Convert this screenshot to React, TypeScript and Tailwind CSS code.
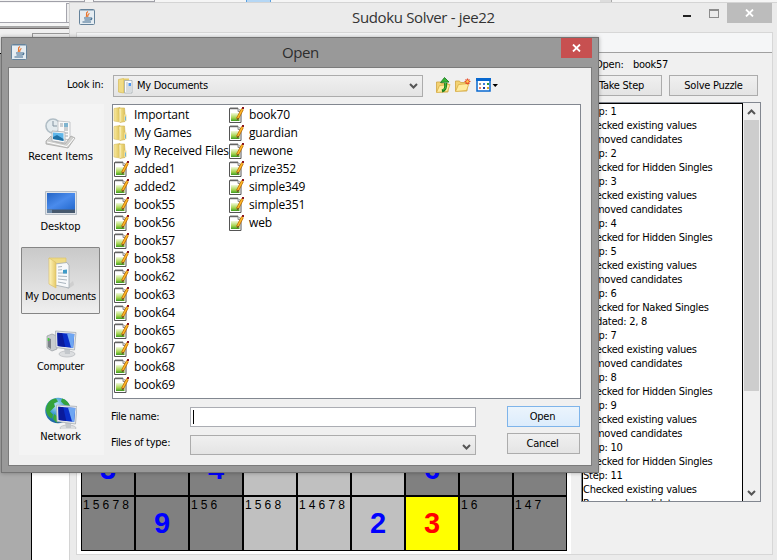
import React from "react";

const ui = "font-['DejaVu_Sans_Condensed','DejaVu_Sans',sans-serif] text-[11px] leading-[14px] tracking-[-0.26px]";
const segoe = "font-['Open_Sans','Noto_Sans',sans-serif]";

function JavaIcon() {
  return (
    <svg className="block h-4 w-4 shrink-0" viewBox="0 0 16 16">
      <rect x=".5" y=".5" width="15" height="15" rx="1" fill="#e6edf2" stroke="#65829a" />
      <path d="M1 1h14v1H1z" fill="#a9bccb" />
      <path d="M9 2.500C5.500 4.500 9 5.500 7 8M10.500 4.500C8 5.500 9.500 6.500 8.500 8" stroke="#e8742c" strokeWidth="1.200" fill="none" />
      <path d="M5 9h6M5.500 11h5M3.500 13h8.500M11 9c3-.5 2 2-.5 2" stroke="#3f6a8e" strokeWidth="1.100" fill="none" />
    </svg>
  );
}

function FolderIcon() {
  return (
    <svg className="block h-4 w-4 shrink-0" viewBox="0 0 16 16">
      <defs>
        <linearGradient id="fold" x1="0" x2="1">
          <stop offset="0" stopColor="#f8eaa4" />
          <stop offset=".5" stopColor="#ecd679" />
          <stop offset="1" stopColor="#dcc05a" />
        </linearGradient>
      </defs>
      <path d="M1 1.500 7 .5V15L1 14z" fill="url(#fold)" stroke="#d8be5f" strokeWidth=".6" />
      <path d="M6 1h5.500l.5 6v7.500L7 15.500z" fill="url(#fold)" stroke="#cfb250" strokeWidth=".6" />
      <path d="M11 7.500h2.500V14H11z" fill="#efdc93" />
      <path d="M12.500 9.500v4" stroke="#6fb4dc" />
      <path d="M7 2v13" stroke="#fbf3c7" />
    </svg>
  );
}

function NoteIcon() {
  return (
    <svg className="block h-[18px] w-[18px] shrink-0" viewBox="0 0 18 18">
      <defs>
        <linearGradient id="note" x1="0" y1="0" x2="0" y2="1">
          <stop offset="0" stopColor="#f2f9d9" />
          <stop offset=".6" stopColor="#a5d450" />
          <stop offset="1" stopColor="#3f9d20" />
        </linearGradient>
      </defs>
      <path d="M1.500 2.500H10l3 3v11H1.500z" fill="#fff" stroke="#555" />
      <path d="M3 1v2.500M5 1v2.500M7 1v2.500M9 1v2.500" stroke="#777" />
      <path d="M10 2.500v3h3" fill="#ddd" stroke="#777" strokeWidth=".8" />
      <path d="M3 7h8.500v8H3z" fill="url(#note)" />
      <path d="M14.500 3 9.300 13" stroke="#b96a00" strokeWidth="2.800" />
      <path d="M14.500 3 9.500 12.500" stroke="#ffb92b" strokeWidth="1.600" />
      <path d="m9.800 11.500-1.300 3.500 2.500-2.500z" fill="#5b4630" />
      <path d="M14 1h2v2h-2z" fill="#8b1620" />
    </svg>
  );
}

function DocsIcon({ className }: { className: string }) {
  return (
    <svg className={className} viewBox="0 0 32 32">
      <defs>
        <linearGradient id="dl" x1="0" x2="1">
          <stop offset="0" stopColor="#fff5bd" />
          <stop offset="1" stopColor="#e5c968" />
        </linearGradient>
      </defs>
      <path d="m21 30 7-6 1 4-6 4z" fill="#c0c0c0" opacity=".5" />
      <path d="M4 1h17v24l-12 1z" fill="#efdb86" stroke="#dcc46b" strokeWidth=".7" />
      <path d="m10 7 12-1.500 2 3V31l-14-3z" fill="#f7f9fb" stroke="#9fa9b2" strokeWidth=".8" />
      <path d="m13 10 4-.5M13 13l4-.3M13 16h9M13 19l9 .5M13 22l9 1M13 25l8 1.500" stroke="#aab5bf" strokeWidth="1" />
      <path d="m18 13 4-.5v4h-4z" fill="#3e9bc9" />
      <path d="m4 1 7 4.500V31l-7-4z" fill="url(#dl)" stroke="#dcc16a" strokeWidth=".7" />
    </svg>
  );
}

function SmallDocs() {
  return (
    <svg className="block h-4 w-4 shrink-0" viewBox="0 0 16 16">
      <path d="M.5 1.500 5.500.5V15l-5-1z" fill="#f0db85" stroke="#d9c065" strokeWidth=".8" />
      <path d="M5 .5h6l.5 14L5 15z" fill="#e5cc69" />
      <path d="M6.500 2.500h7.500V15H6.500z" fill="#fbfbfb" stroke="#9aa3ab" strokeWidth=".7" />
      <path d="M8 5h2M8 7h2M8 9h5M8 11h5M8 13h5" stroke="#a2adb8" strokeWidth=".8" />
      <path d="M10.500 5h2.500v3h-2.500z" fill="#4b95ef" />
    </svg>
  );
}

function RecentIcon() {
  return (
    <svg className="block h-8 w-8" viewBox="0 0 32 32">
      <circle cx="8" cy="9" r="7" fill="#e3ebef" stroke="#b0bdc5" strokeWidth="1.600" />
      <path d="M8 4v5h4" stroke="#8293a0" fill="none" />
      <path d="m13 4 12 1v18l-12-2z" fill="#fafafa" stroke="#b9bdc0" strokeWidth=".8" />
      <path d="M15 7h3M15 9h3M19 11h4M19 13h4M19 16h4M19 19h4" stroke="#9ba4aa" />
      <path d="M19 6h4v4h-4z" fill="#7fb4cf" />
      <path d="m1 24 5-5 2 5 12 3 6-8 4 2-7 10L1 27z" fill="#d0d0ce" stroke="#9f9f9d" strokeWidth=".7" />
      <path d="m7 14 13 1v11L7 24z" fill="#f8f8f8" stroke="#b5b8bb" />
      <path d="m8 15.500 10.500.7v7.500L8 22z" fill="#5fb6ea" />
      <path d="m8 20 4-2 6.500 4v2L8 22z" fill="#1f70a5" />
      <path d="m2 25 20 4.500 7-8.500" stroke="#fff" fill="none" />
    </svg>
  );
}

function DesktopIcon() {
  return (
    <svg className="block h-8 w-8" viewBox="0 0 32 32">
      <defs>
        <linearGradient id="desk" x1="0" y1="0" x2="1" y2="1">
          <stop offset="0" stopColor="#2464c4" />
          <stop offset=".5" stopColor="#4a8bec" />
          <stop offset="1" stopColor="#2368cd" />
        </linearGradient>
      </defs>
      <path d="M.5 4.500h31v23H.5z" fill="#dfe3e8" stroke="#b6bec7" />
      <path d="M2 6h28v17H2z" fill="url(#desk)" />
      <path d="M2 22.500h28V26H2z" fill="#46586d" />
      <path d="M2 22.500h5V26H2z" fill="#6a87a6" />
    </svg>
  );
}

function Monitor() {
  return (
    <g>
      <ellipse cx="22" cy="28" rx="8" ry="3" fill="#dcdee0" stroke="#b4b8bc" strokeWidth=".7" />
      <path d="m19 22 6 1v5h-5z" fill="#c3c7cb" />
      <path d="m10.500 5 20.500 1.500L29.500 24 11 21.500z" fill="#e5e8ea" stroke="#a7adb3" strokeWidth=".8" />
      <path d="m12.300 6.800 17 1.300-1.200 14-15.400-2z" fill="#0a2fc9" />
      <path d="m22 7.500 7.300.6-1.200 14-2-.3z" fill="#6ea6f2" />
      <path d="m12.300 6.800 5 .4 3 13.900-7.600-1z" fill="#0a1a9c" />
    </g>
  );
}

function ComputerIcon() {
  return (
    <svg className="block h-8 w-8" viewBox="0 0 32 32">
      <path d="m2 9 5-2 5 2v13l-5 2-5-3z" fill="#c9cdd0" stroke="#969b9f" strokeWidth=".7" />
      <path d="m3 11 3 1v10l-3-2z" fill="#7c8288" />
      <path d="M3.500 11v3" stroke="#45d03c" strokeWidth="1.500" />
      <g transform="translate(0 -1)"><Monitor /></g>
    </svg>
  );
}

function NetworkIcon() {
  return (
    <svg className="block h-8 w-8" viewBox="0 0 32 32">
      <defs>
        <radialGradient id="globe" cx=".45" cy=".3" r=".7">
          <stop offset="0" stopColor="#bfe8fa" />
          <stop offset=".5" stopColor="#3d9bd0" />
          <stop offset="1" stopColor="#165e9c" />
        </radialGradient>
      </defs>
      <circle cx="13" cy="13.500" r="12.800" fill="url(#globe)" />
      <path d="M1 12C2 5 6 2 11 1.500l2 3-4 2 1 3-5 5 3 3-1 4C3 20 1 16 1 12zM17 1.500c4 1 7 4 8 8l-6-2-3-3z" fill="#35a33b" />
      <path d="m9 17 4 3-1 6-4-4z" fill="#3baa36" />
      <g transform="translate(1 3)"><Monitor /></g>
    </svg>
  );
}

function Chevron({ up }: { up?: boolean }) {
  return (
    <svg className="block h-[6px] w-[9px] shrink-0" viewBox="0 0 9 6">
      <path d={up ? "m1 5 3.500-3.500L8 5" : "m1 1 3.500 3.500L8 1"} stroke="#555" strokeWidth="2" fill="none" />
    </svg>
  );
}

function Cross() {
  return (
    <svg className="block h-2 w-[9px]" viewBox="0 0 9 8">
      <path d="m1 .5 7 7M8 .5l-7 7" stroke="#fff" strokeWidth="1.800" />
    </svg>
  );
}

function OpenFolder() {
  return (
    <>
      <path d="M1.500 5h4l1 1.500H13V15H1.500z" fill="#f3d273" stroke="#cfa443" strokeWidth=".8" />
      <path d="m4.500 8.500 10.500-1-2.500 7-11 1z" fill="#ffec9f" stroke="#d9ad43" strokeWidth=".8" />
    </>
  );
}

const E = "Checked existing values";
const R = "Removed candidates";
const H = "Checked for Hidden Singles";
const log = [
  "Step: 1", E, R, "Step: 2", H, "Step: 3", E, R, "Step: 4", H, "Step: 5", E, R,
  "Step: 6", "Checked for Naked Singles", "Updated: 2, 8", "Step: 7", E, R, "Step: 8", H,
  "Step: 9", E, R, "Step: 10", H, "Step: 11", E, R,
];

type Cell = { bg: string; big?: string; color?: string; small?: string };
const dark = "bg-[#808080]";
const light = "bg-[#c0c0c0]";
const blue = "text-[#0000ff]";
const rows: Cell[][] = [
  [
    { bg: dark, big: "3", color: blue }, { bg: dark }, { bg: dark, big: "4", color: blue },
    { bg: light }, { bg: light }, { bg: light },
    { bg: dark, big: "6", color: blue }, { bg: dark }, { bg: dark },
  ],
  [
    { bg: dark, small: "1 5 6 7 8" }, { bg: dark, big: "9", color: blue }, { bg: dark, small: "1 5 6" },
    { bg: light, small: "1 5 6 8" }, { bg: light, small: "1 4 6 7 8" }, { bg: light, big: "2", color: blue },
    { bg: "bg-[#ffff00]", big: "3", color: "text-[#ff0000]" }, { bg: dark, small: "1 6" }, { bg: dark, small: "1 4 7" },
  ],
];

function Board() {
  return (
    <div className="mt-[388px] grid h-[110px] w-[486px] grid-cols-[repeat(9,52px)] grid-rows-[52px_53px] gap-[2px] bg-black pt-[2px] pl-px font-['Liberation_Sans',sans-serif]">
      {rows.flat().map((c, i) => (
        <div key={i} className={`overflow-hidden ${c.bg}`}>
          {c.small && <div className="pl-px pt-px text-[12px] leading-[14px] tracking-[-0.1px] whitespace-pre text-black">{c.small}</div>}
          {c.big && <div className={`pt-[9px] text-center text-[29px] leading-[34px] font-bold ${c.color}`}>{c.big}</div>}
        </div>
      ))}
    </div>
  );
}

function Button({ children, className }: { children: React.ReactNode; className: string }) {
  return <div className={`flex shrink-0 items-center justify-center border ${className}`}>{children}</div>;
}
const plain = "border-[#acacac] bg-linear-to-b from-[#f0f0f0] to-[#e4e4e4]";

function MainWindow() {
  return (
    <div className="absolute top-[2px] left-[69px] flex h-[570px] w-[720px] flex-col border border-[#d4d4d4] bg-[#ebebeb]">
      <div className="flex h-[29px] shrink-0">
        <div className="w-[9px]" />
        <div className="pt-[6px]"><JavaIcon /></div>
        <div className={`ml-[257px] w-[146px] pt-[4px] text-[15px] leading-[20px] tracking-[-0.35px] whitespace-nowrap text-[#333] ${segoe}`}>Sudoku Solver - jee22</div>
        <div className="ml-[185px] mt-[12px] h-[2px] w-2 bg-[#222]" />
        <div className="ml-[18px] mt-[6px] h-[9px] w-[10px] border border-t-2 border-[#8c8c8c]" />
        <div className="ml-2 flex h-[20px] w-[45px] items-center justify-center bg-[#bcbcbc]"><Cross /></div>
      </div>
      <div className="ml-[6px] flex h-[523px] w-[697px] flex-col border border-[#d7d7d7] bg-[#f0f0f0]">
        <div className="h-[20px] shrink-0 border-b border-[#a0a0a0] bg-[#f5f6f7]" />
        <div className="flex min-h-0 grow">
          <div className="w-[494px] shrink-0 bg-white pl-1"><Board /></div>
          <div className={`flex flex-col pl-[10px] ${ui}`}>
            <div className="flex h-[22px] pt-[5px] pl-[14px]"><span className="w-[38px]">Open:</span><span>book57</span></div>
            <div className="flex gap-[7px]">
              <Button className={`h-[21px] w-[81px] ${plain}`}>Take Step</Button>
              <Button className={`h-[21px] w-[89px] ${plain}`}>Solve Puzzle</Button>
            </div>
            <div className="mt-[6px] flex h-[400px] w-[180px] border border-[#828790] bg-white">
              <div className="w-[161px] overflow-hidden border border-b-0 border-black pt-px whitespace-nowrap text-black">
                {log.map((l, i) => <div key={i}>{l}</div>)}
              </div>
              <div className="flex w-[17px] flex-col items-center bg-[#f0f0f0]">
                <div className="flex h-[17px] shrink-0 items-center"><Chevron up /></div>
                <div className="h-[271px] w-[15px] shrink-0 bg-[#cdcdcd]" />
                <div className="grow" />
                <div className="flex h-[17px] items-center"><Chevron /></div>
              </div>
            </div>
          </div>
        </div>
      </div>
    </div>
  );
}

const files1 = ["Important", "My Games", "My Received Files", "added1", "added2", "book55", "book56", "book57", "book58", "book62", "book63", "book64", "book65", "book67", "book68", "book69"];
const files2 = ["book70", "guardian", "newone", "prize352", "simple349", "simple351", "web"];

function FileRow({ name, folder }: { name: string; folder: boolean }) {
  return (
    <div className="flex h-[18px] items-center">
      <div className="flex w-[21px] shrink-0">{folder ? <FolderIcon /> : <NoteIcon />}</div>
      <span className="whitespace-nowrap">{name}</span>
    </div>
  );
}

const places = [
  { label: "Recent Items", icon: <RecentIcon />, tracking: "tracking-[-0.03px]" },
  { label: "Desktop", icon: <DesktopIcon />, tracking: "tracking-[-0.15px]" },
  { label: "My Documents", icon: <DocsIcon className="block h-8 w-8" />, tracking: "tracking-[-0.26px]" },
  { label: "Computer", icon: <ComputerIcon />, tracking: "tracking-[-0.26px]" },
  { label: "Network", icon: <NetworkIcon />, tracking: "tracking-[-0.1px]" },
];

function Dialog() {
  return (
    <div className={`absolute top-[37px] left-[1px] flex h-[436px] w-[598px] flex-col border border-[#747474] bg-[#999] shadow-[0_0_4px_rgba(0,0,0,0.3)] text-black ${ui}`}>
      <div className="flex h-[29px] shrink-0">
        <div className="pt-[6px] pl-[9px]"><JavaIcon /></div>
        <div className={`ml-[255px] w-[279px] pt-[4px] text-[15px] leading-[20px] tracking-[-0.45px] text-[#2d2d2d] ${segoe}`}>Open</div>
        <div className="flex h-[20px] w-[31px] items-center justify-center bg-[#c75050]"><Cross /></div>
      </div>
      <div className="ml-[6px] flex h-[399px] w-[584px] flex-col border border-[#7b7b7b] bg-[#f0f0f0]">
        <div className="flex h-[36px] shrink-0 items-center pb-[2px]">
          <div className="w-[104px] pl-[58px]">Look in:</div>
          <div className="mt-[2px] flex h-[22px] w-[310px] items-center border border-[#acacac] bg-linear-to-b from-[#f0f0f0] to-[#e4e4e4] pr-[4px] pl-1">
            <SmallDocs /><span className="mb-px ml-[3px] grow">My Documents</span><Chevron />
          </div>
          <svg className="ml-3 h-4 w-4" viewBox="0 0 16 16">
            <OpenFolder />
            <path d="M7 14c4-1 4-4 3.500-8" stroke="#187a1b" strokeWidth="3" fill="none" />
            <path d="M5.500 5.500 9.500.5 14 5z" fill="#37b534" stroke="#14731a" strokeWidth=".8" />
            <path d="M8 13c3-1 3-4 2.500-7" stroke="#4fca45" fill="none" />
          </svg>
          <svg className="ml-[4px] h-4 w-4" viewBox="0 0 16 16">
            <g transform="translate(-1 -1)"><OpenFolder /></g>
            <path d="M12.500 1.500v6M9.500 4.500h6M10.500 2.500l4 4M14.500 2.500l-4 4" stroke="#e8502b" strokeWidth="1.200" />
            <circle cx="12.500" cy="4.500" r="1.200" fill="#ffce54" />
          </svg>
          <svg className="ml-[5px] h-[14px] w-[22px]" viewBox="0 0 22 14">
            <rect x="1" y="1" width="13" height="12" fill="#fff" stroke="#0868cf" strokeWidth="1.500" />
            <path d="M0 0h15v3H0z" fill="#0868cf" />
            <path d="M3 5h2v2H3z" fill="#999" /><path d="M7 5h2v2H7z" fill="#3b7fe0" /><path d="M11 5h2v2h-2z" fill="#2e9b38" />
            <path d="M3 9h2v2H3z" fill="#f08060" /><path d="M7 9h2v2H7z" fill="#183c98" /><path d="M11 9h2v2h-2z" fill="#dba62b" />
            <path d="M16.500 6H22l-2.750 3z" fill="#000" />
          </svg>
        </div>
        <div className="flex pl-[10px]">
          <div className="flex h-[351px] w-[85px] shrink-0 flex-col gap-[3px] bg-[#f4f4f4] pt-[3px] pl-[2px]">
            {places.map((p) => (
              <div key={p.label} className={`flex h-[67px] w-[79px] flex-col items-center border ${p.label === "My Documents" ? "rounded-[1px] border-[#858585] bg-linear-to-b from-[#c9c9c9] to-[#efefef]" : "border-transparent"} pt-[9px]`}>
                {p.icon}
                <span className={`mt-px whitespace-nowrap ${p.tracking}`}>{p.label}</span>
              </div>
            ))}
          </div>
          <div className="pl-[8px]">
            <div className={`flex h-[295px] w-[469px] border border-[#828790] bg-white pt-px text-[12px] leading-[18px] tracking-[-0.15px] ${segoe}`}>
              <div className="w-[115px]">{files1.map((f, i) => <FileRow key={f} name={f} folder={i < 3} />)}</div>
              <div>{files2.map((f) => <FileRow key={f} name={f} folder={false} />)}</div>
            </div>
            <div className="mt-[7px] flex h-[21px]">
              <div className="-ml-px w-[79px] pt-[4px]">File name:</div>
              <div className="mt-px h-[20px] w-[286px] border border-[#abadb3] bg-white pt-[2px] pl-[2px]"><div className="h-[14px] w-px bg-black" /></div>
              <Button className="ml-[31px] h-[21px] w-[73px] border-[#7eb4ea] bg-linear-to-b from-[#ebf4fc] to-[#dcecfc] pr-[2px]">Open</Button>
            </div>
            <div className="mt-[6px] flex h-[22px]">
              <div className="-ml-px w-[79px] pt-[3px]">Files of type:</div>
              <div className={`mt-[2px] flex h-[20px] w-[286px] items-center justify-end border pr-[4px] pt-[3px] ${plain}`}><Chevron /></div>
              <Button className={`ml-[31px] h-[21px] w-[73px] pr-[2px] ${plain}`}>Cancel</Button>
            </div>
          </div>
        </div>
      </div>
    </div>
  );
}

export default function App() {
  return (
    <div className="relative flex h-[560px] w-[777px] flex-col overflow-hidden bg-[#f5f5f5]">
      <div className="flex h-[3px] shrink-0">
        <div className="h-[2px] w-[85px] border-r border-b border-[#a0a0a8]" />
        <div className="ml-2 h-[2px] w-[62px] border border-t-0 border-[#a0a0a8]" />
        <div className="ml-[91px] h-[3px] w-[25px] border-r border-l border-[#5aa0e0] bg-[#b5d7f5]" />
        <div className="ml-[329px] h-[3px] w-[12px] border-r border-[#aaa] bg-[#ddd]" />
      </div>
      <div className="flex h-[20px] shrink-0">
        <div className="w-[66px] border-b border-[#a5a5ad] bg-white" />
        <div className="w-[4px] border border-r-0 border-[#a5a5ad] bg-[#eee]" />
      </div>
      <div className="mt-[3px] h-[3px] w-[70px] border-t border-b border-t-[#a5a5a5] border-b-[#6e6868] bg-[#aaa]" />
      <div className="h-[25px] w-[70px] shrink-0 border-b border-black bg-[#f0f0f0] pt-[4px] pl-[32px]"><div className="h-[8px] border-t border-l border-[#999]" /></div>
      <div className="flex min-h-0 grow">
        <div className="w-[32px] border-r border-black bg-[#ababab]" />
        <div className="w-[38px] bg-white" />
      </div>
      <MainWindow />
      <Dialog />
    </div>
  );
}
